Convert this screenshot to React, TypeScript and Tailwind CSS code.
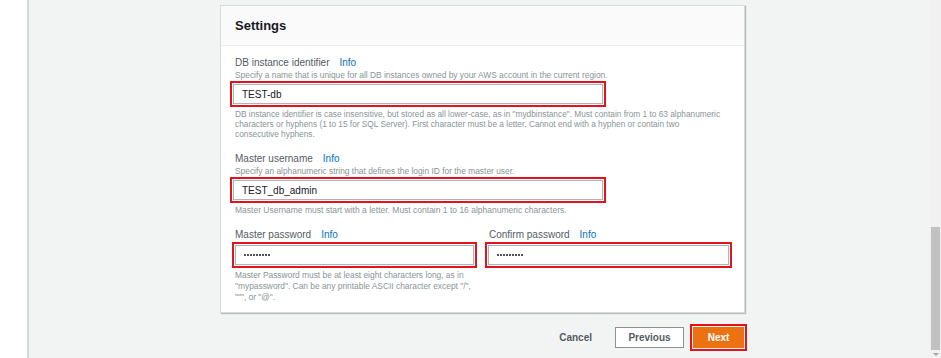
import React from 'react';

const font = { fontFamily: '"Liberation Sans", Arial, sans-serif' };

function Label({ text }: { text: string }) {
  return (
    <div className="flex items-center h-[14px] text-[10px] leading-[14px] text-[#545b64]">
      <span>{text}</span>
      <span className="ml-[10px] text-[#0073bb]">Info</span>
    </div>
  );
}

function Marked({ value, className }: { value: string; className: string }) {
  return (
    <div className={'border-2 border-[#e4131b] p-px ' + className}>
      <div className="h-[20px] border border-[#aab7b8] bg-white flex items-center pl-[8px] text-[10px] text-[#16191f]">
        {value}
      </div>
    </div>
  );
}

function Dots() {
  return (
    <div className="flex gap-[1px]">
      {Array.from({ length: 9 }).map((_, i) => (
        <span key={i} className="w-[2px] h-[2px] bg-[#16191f] rounded-full" />
      ))}
    </div>
  );
}

function PwBox({ className }: { className: string }) {
  return (
    <div className={'border-2 border-[#e4131b] p-px ' + className}>
      <div className="h-[20px] border border-[#aab7b8] bg-white flex items-center pl-[8px]">
        <Dots />
      </div>
    </div>
  );
}

export default function App() {
  return (
    <div className="w-[941px] h-[358px] flex bg-[#f2f3f3] overflow-hidden" style={font}>
      <div className="w-[29px] bg-white border-r-2 border-[#d6dada] shrink-0" />

      <div className="flex-1 pl-[191px] pt-[5px]">
        <div className="w-[525px] bg-white border border-[#d5dbdb] shadow-[1px_1px_1px_0_rgba(0,28,36,0.25)]">
          <div className="h-[40px] bg-[#fafafa] border-b border-[#eaeded] pl-[14px] flex items-center">
            <span className="text-[13px] font-bold text-[#16191f]">Settings</span>
          </div>

          <div className="pl-[14px] pr-[12px] pt-[10px] pb-[9px]">
            <Label text="DB instance identifier" />
            <div className="text-[8.4px] leading-[11px] text-[#879596]">
              Specify a name that is unique for all DB instances owned by your AWS account in the current region.
            </div>
            <Marked value="TEST-db" className="-ml-[5px] w-[376px]" />
            <div className="mt-[2px] w-[488px] text-[8.3px] leading-[10px] text-[#879596]">
              DB instance identifier is case insensitive, but stored as all lower-case, as in "mydbinstance". Must contain from 1 to 63 alphanumeric characters or hyphens (1 to 15 for SQL Server). First character must be a letter. Cannot end with a hyphen or contain two consecutive hyphens.
            </div>

            <div className="mt-[13px]">
              <Label text="Master username" />
            </div>
            <div className="text-[8.4px] leading-[11px] text-[#879596]">
              Specify an alphanumeric string that defines the login ID for the master user.
            </div>
            <Marked value="TEST_db_admin" className="-ml-[5px] w-[376px]" />
            <div className="mt-[2px] text-[8.5px] leading-[10px] text-[#879596]">
              Master Username must start with a letter. Must contain 1 to 16 alphanumeric characters.
            </div>

            <div className="mt-[13px] flex">
              <div className="w-[255px]">
                <Label text="Master password" />
                <PwBox className="-ml-[3px] w-[245px]" />
                <div className="mt-[2px] w-[240px] text-[8.4px] leading-[11px] text-[#879596]">
                  Master Password must be at least eight characters long, as in "mypassword". Can be any printable ASCII character except "/", """, or "@".
                </div>
              </div>
              <div>
                <Label text="Confirm password" />
                <PwBox className="-ml-[4px] w-[247px]" />
              </div>
            </div>
          </div>
        </div>

        <div className="w-[527px] flex justify-end items-center mt-[11px]">
          <span className="text-[10px] font-bold text-[#545b64] mr-[23px]">Cancel</span>
          <div className="w-[69px] h-[21px] border border-[#879596] bg-white flex items-center justify-center text-[10px] font-bold text-[#545b64]">
            Previous
          </div>
          <div className="ml-[6px] border-2 border-[#e4131b] p-px">
            <div className="w-[51px] h-[21px] bg-[#ec7211] flex items-center justify-center text-[10px] font-bold text-white">
              Next
            </div>
          </div>
        </div>
      </div>

      <div className="w-[11px] bg-[#f1f1f1] shrink-0 flex flex-col">
        <div className="h-[227px]" />
        <div className="mx-px h-[123px] bg-[#c1c1c1]" />
        <div className="flex-1 flex items-center justify-center">
          <div className="w-0 h-0 border-l-[3px] border-r-[3px] border-t-[3px] border-l-transparent border-r-transparent border-t-[#a3a3a3]" />
        </div>
      </div>
    </div>
  );
}
